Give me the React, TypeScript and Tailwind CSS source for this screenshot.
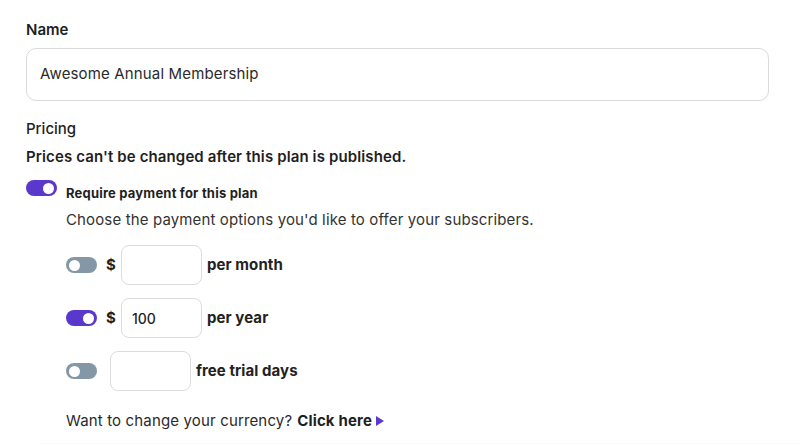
import React from "react";

function Toggle({ on }: { on: boolean }) {
  return (
    <span
      className={
        "flex h-[16px] w-[31px] shrink-0 items-center rounded-full px-[3px] " +
        (on ? "justify-end bg-[#5a38cc]" : "justify-start bg-[#8497a7]")
      }
    >
      <span className="h-[11px] w-[11px] rounded-full bg-white" />
    </span>
  );
}

function PriceRow({ on, dollar, value, label }: { on: boolean; dollar: boolean; value: string; label: string }) {
  return (
    <div className="flex h-[40px] items-center">
      <Toggle on={on} />
      {dollar ? (
        <span className="ml-[9px] w-[15px] text-[15px] font-bold text-[#222]">$</span>
      ) : (
        <span className="w-[13px]" />
      )}
      <div className="flex h-[40px] w-[81px] items-center rounded-[8px] border border-[#dcdcdc] bg-white px-[10px] text-[14px] font-medium text-[#1f1f1f]">
        {value}
      </div>
      <span className="ml-[5px] text-[15px] font-bold tracking-[0.005em] text-[#222]">{label}</span>
    </div>
  );
}

export default function App() {
  return (
    <div className="h-[444px] w-[800px] overflow-hidden bg-white font-['Inter',sans-serif] text-[#1f1f1f]">
      <div className="px-[26px] pt-[20px]">
        <div className="text-[15px] font-semibold leading-[20px]">Name</div>
        <div className="mt-[8px] flex h-[53px] w-[743px] items-center rounded-[10px] border border-[#dadada] px-[13px] text-[15px] tracking-[0.01em] text-[#2a2a2a]">
          Awesome Annual Membership
        </div>

        <div className="mt-[18px] text-[15px] font-medium leading-[20px]">Pricing</div>
        <div className="mt-[8px] text-[15px] font-semibold leading-[20px] tracking-[0.008em]">
          Prices can't be changed after this plan is published.
        </div>

        <div className="mt-[13px] flex items-start">
          <Toggle on />
          <div className="ml-[9px] mt-[5px] flex flex-col">
            <span className="text-[13px] font-bold leading-[16px] tracking-[0.015em]">Require payment for this plan</span>
            <span className="mt-[9px] text-[15px] leading-[20px] tracking-[0.009em] text-[#333]">
              Choose the payment options you'd like to offer your subscribers.
            </span>
            <div className="mt-[15px] flex flex-col gap-[13px]">
              <PriceRow on={false} dollar value="" label="per month" />
              <PriceRow on dollar value="100" label="per year" />
              <PriceRow on={false} dollar={false} value="" label="free trial days" />
            </div>
            <div className="mt-[20px] flex items-center text-[15px] leading-[20px] tracking-[0.01em] text-[#2a2a2a]">
              <span>Want to change your currency?</span>
              <span className="ml-[5px] font-bold text-[#1f1f1f]">Click here</span>
              <svg width="8" height="10" viewBox="0 0 8 10" className="ml-[4px]">
                <path d="M0 0 L8 5 L0 10 Z" fill="#5a38cc" />
              </svg>
            </div>
          </div>
        </div>
      </div>
      <div className="ml-[40px] mt-[12px] h-[20px] bg-gradient-to-b from-[#fbfbfb] to-[#f5f5f5]" />
    </div>
  );
}
